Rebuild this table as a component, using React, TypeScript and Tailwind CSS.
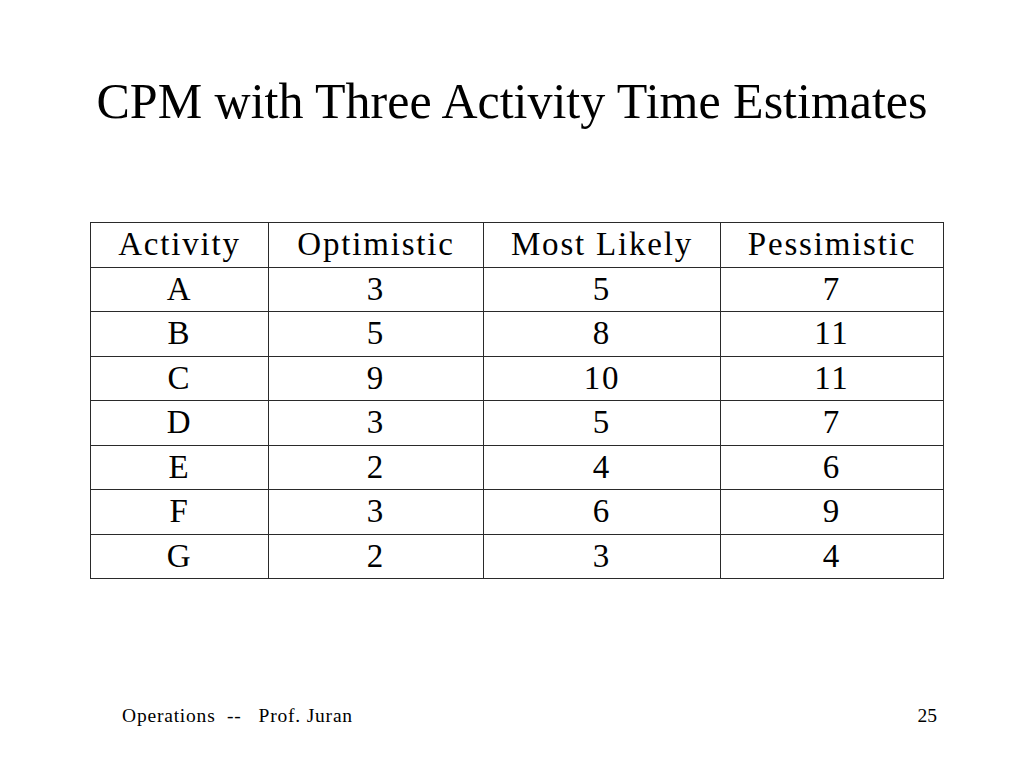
const HEADERS = ["Activity", "Optimistic", "Most Likely", "Pessimistic"];

const ROWS: [string, number, number, number][] = [
  ["A", 3, 5, 7],
  ["B", 5, 8, 11],
  ["C", 9, 10, 11],
  ["D", 3, 5, 7],
  ["E", 2, 4, 6],
  ["F", 3, 6, 9],
  ["G", 2, 3, 4],
];

const COLS = ["w-[178px]", "w-[215px]", "w-[237px]", "w-[223px]"];

const SERIF = { fontFamily: '"Liberation Serif", "Times New Roman", serif' };

function Row({ cells }: { cells: (string | number)[] }) {
  return (
    <div className="flex h-[44.5px]">
      {cells.map((c, i) => (
        <div
          key={i}
          className={`${COLS[i]} flex items-center justify-center border-r-[1.5px] border-b-[1.5px] border-[#2a2a2a] text-[33px] leading-none tracking-[1.8px] text-black`}
        >
          {c}
        </div>
      ))}
    </div>
  );
}

export default function App() {
  return (
    <div className="w-[1024px] h-[768px] bg-white flex flex-col" style={SERIF}>
      {/* Slide title */}
      <h1 className="pt-[74px] text-center text-[50px] leading-[54px] text-black">
        CPM with Three Activity Time Estimates
      </h1>

      {/* Estimates table */}
      <div className="mt-[94px] ml-[90px] w-fit border-l-[1.5px] border-t-[1.5px] border-[#2a2a2a]">
        <Row cells={HEADERS} />
        {ROWS.map((r) => (
          <Row key={r[0]} cells={r} />
        ))}
      </div>

      {/* Footer */}
      <div className="mt-auto mb-[38px] flex justify-between pl-[122px] pr-[87px] text-[19.5px] text-black">
        <span className="whitespace-pre tracking-[0.8px]">Operations  --   Prof. Juran</span>
        <span>25</span>
      </div>
    </div>
  );
}
